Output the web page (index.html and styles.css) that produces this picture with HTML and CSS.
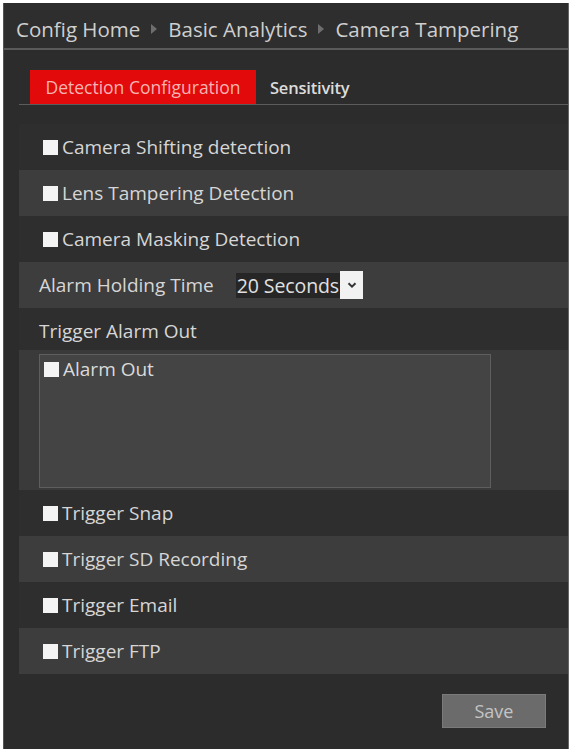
FILE: index.html
```html
<!DOCTYPE html>
<html>
<head>
<meta charset="utf-8">
<link rel="stylesheet" href="styles.css">
</head>
<body>
<div class="frame">
  <div class="crumbs">
    <span>Config Home</span><span class="tri"></span><span>Basic Analytics</span><span class="tri"></span><span>Camera Tampering</span>
  </div>
  <div class="tabs">
    <div class="tab active">Detection Configuration</div>
    <div class="tab">Sensitivity</div>
  </div>
  <div class="rows">
    <div class="row dark"><span class="cb"></span>Camera Shifting detection</div>
    <div class="row light"><span class="cb"></span>Lens Tampering Detection</div>
    <div class="row dark"><span class="cb"></span>Camera Masking Detection</div>
    <div class="row light label-row"><span class="lbl">Alarm Holding Time</span>
      <span class="select"><span class="sel-val">20 Seconds</span><span class="sel-btn"><svg width="10" height="6" viewBox="0 0 10 6"><path d="M1.5 1.2 L5 4.6 L8.5 1.2" fill="none" stroke="#333" stroke-width="2"/></svg></span></span>
    </div>
    <div class="row dark label-row short"><span class="lbl">Trigger Alarm Out</span></div>
    <div class="panel">
      <div class="box"><div class="box-item"><span class="cb"></span>Alarm Out</div></div>
    </div>
    <div class="row dark"><span class="cb"></span>Trigger Snap</div>
    <div class="row light"><span class="cb"></span>Trigger SD Recording</div>
    <div class="row dark"><span class="cb"></span>Trigger Email</div>
    <div class="row light"><span class="cb"></span>Trigger FTP</div>
  </div>
  <div class="footer"><div class="save">Save</div></div>
</div>
</body>
</html>
```

FILE: styles.css
```css
html, body { margin: 0; padding: 0; }
body {
  background: #fff;
  width: 571px;
  height: 751px;
  overflow: hidden;
  font-family: "Open Sans", "Noto Sans", sans-serif;
}
.frame {
  margin: 3px 2px 0 3px;
  height: 746px;
  background: #2c2c2c;
  border-left: 1px solid #555;
  border-right: 1px solid #666;
  display: flex;
  flex-direction: column;
}
.crumbs {
  box-sizing: border-box;
  height: 47px;
  padding-top: 6px;
  padding-left: 12px;
  border-bottom: 2px solid #5a5a5a;
  display: flex;
  align-items: center;
  gap: 11px;
  font-size: 20.5px;
  color: #cfcfcf;
  background: #2e2e2e;
}
.tri {
  width: 0; height: 0;
  border-top: 5px solid transparent;
  border-bottom: 5px solid transparent;
  border-left: 6px solid #6e6e6e;
}
.tabs {
  margin: 20px 0 0 15px;
  height: 34px;
  border-bottom: 1px solid #5c5c5c;
  display: flex;
  align-items: stretch;
  padding-left: 11px;
}
.tab {
  display: flex;
  align-items: center;
  font-size: 16.5px;
  color: #dcdcdc;
  padding: 0 14px;
  font-weight: 600;
  letter-spacing: -0.2px;
}
.tab.active {
  background: #e20a0a;
  color: #f6b3b3;
  font-weight: 400;
  font-size: 17.5px;
  letter-spacing: 0;
  width: 200px;
  justify-content: center;
  padding: 0 13px;
}
.rows {
  margin-top: 19px;
  margin-left: 15px;
  display: flex;
  flex-direction: column;
}
.row {
  height: 46px;
  display: flex;
  align-items: center;
  padding-left: 24px;
  font-size: 19px;
  color: #d6d6d6;
}
.row.dark { background: #2e2e2e; }
.row.light { background: #3d3d3d; }
.row.short { height: 42px; padding-top: 3px; box-sizing: border-box; }
.cb {
  width: 15px;
  height: 15px;
  background: #f4f4f4;
  margin-right: 4px;
  flex: none;
}
.label-row { padding-left: 20px; }
.lbl { margin-right: 22px; }
.select {
  display: flex;
  align-items: center;
  height: 28px;
}
.sel-val {
  background: #262626;
  color: #e0e0e0;
  height: 25px;
  line-height: 25px;
  padding: 0 1px 0 1px;
  font-size: 19.5px;
  letter-spacing: -0.1px;
}
.sel-btn {
  width: 23px;
  height: 28px;
  background: #f2f2f2;
  display: flex;
  align-items: center;
  justify-content: center;
}
.panel {
  background: #3a3a3a;
  padding: 4px 0 2px 20px;
}
.box {
  width: 450px;
  height: 132px;
  border: 1px solid #5e5e5e;
  background: #444;
}
.box-item {
  display: flex;
  align-items: center;
  padding: 1px 0 0 4px;
  font-size: 19px;
  color: #dadada;
}
.footer {
  flex: 1;
  display: flex;
  justify-content: flex-end;
  align-items: flex-start;
  padding: 20px 22px 0 0;
}
.save {
  width: 102px;
  height: 32px;
  background: #6b6b6b;
  border: 1px solid #7a7a7a;
  color: #c4c4c4;
  font-size: 18px;
  display: flex;
  align-items: center;
  justify-content: center;
}
```
